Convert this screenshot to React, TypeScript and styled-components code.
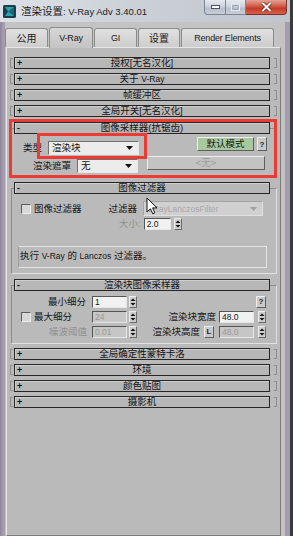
import React from 'react';
import styled, { createGlobalStyle } from 'styled-components';

const GlobalStyle = createGlobalStyle`
  html, body {
    margin: 0;
    padding: 0;
    background: #3a3a3a;
  }
  body {
    font-family: "Liberation Sans", "Noto Sans CJK SC", sans-serif;
    font-size: 9.5px;
    color: #151515;
  }
`;

const Window = styled.div`
  width: 293px;
  height: 536px;
  box-sizing: border-box;
  display: flex;
  flex-direction: column;
  overflow: hidden;
  background: linear-gradient(to right, #8d8597 0, #a59daf 3px, #a59daf 100%);
  border-right: 3px solid #3b3b3b;
`;

const TitleBar = styled.div`
  height: 22px;
  flex: none;
  display: flex;
  align-items: center;
  padding-left: 3px;
  background: linear-gradient(90deg, #dde1e7 0%, #ccd1d8 45%, #c0c4cc 100%);
`;

const TitleText = styled.span`
  margin-left: 5px;
  font-size: 10.5px;
  line-height: 12px;
  color: #1b1b1b;
  white-space: nowrap;
`;

const TitleLat = styled.span`
  font-size: 9.5px;
`;

const WinButtons = styled.div`
  margin-left: auto;
  margin-right: 3px;
  align-self: flex-start;
  display: flex;
  height: 15px;
`;

const WinButton = styled.div<{ $kind: 'min' | 'max' | 'close' }>`
  width: ${(p) => (p.$kind === 'close' ? 41 : p.$kind === 'min' ? 22 : 20)}px;
  height: 15px;
  box-sizing: border-box;
  display: flex;
  align-items: center;
  justify-content: center;
  border: 1px solid ${(p) => (p.$kind === 'close' ? '#7a3226' : '#7d8594')};
  border-top: none;
  border-left-width: ${(p) => (p.$kind === 'min' ? 1 : 0)}px;
  border-radius: ${(p) =>
    p.$kind === 'min' ? '0 0 0 4px' : p.$kind === 'close' ? '0 0 4px 0' : '0'};
  background: ${(p) =>
    p.$kind === 'close'
      ? 'linear-gradient(#e4a496 0%, #cf5a47 45%, #c43b28 60%, #d8624c 100%)'
      : 'linear-gradient(#e6eaf0 0%, #ccd3dc 45%, #b7c0cc 60%, #c6ced8 100%)'};
`;

const Client = styled.div`
  flex: 1;
  display: flex;
  flex-direction: column;
  margin: 0 5px;
  background: #c3c3c3;
`;

const TabRow = styled.div`
  height: 25px;
  flex: none;
  display: flex;
  align-items: flex-end;
  position: relative;
  z-index: 1;
`;

const Tab = styled.div<{ $active?: boolean; $w: number; $latin?: boolean }>`
  width: ${(p) => p.$w}px;
  height: ${(p) => (p.$active ? 21 : 19)}px;
  box-sizing: border-box;
  margin-right: 1px;
  margin-bottom: ${(p) => (p.$active ? -1 : 0)}px;
  display: flex;
  align-items: center;
  justify-content: center;
  border: 1px solid #8b8b8b;
  border-bottom: none;
  border-radius: 3px 3px 0 0;
  background: ${(p) =>
    p.$active ? 'linear-gradient(#d6d6d6, #c4c4c4)' : 'linear-gradient(#e0e0e0, #cdcdcd)'};
  font-size: ${(p) => (p.$latin ? 9 : 10)}px;
  line-height: 11px;
  letter-spacing: ${(p) => (p.$latin ? '-0.2px' : '0')};
  color: #1a1a1a;
  white-space: nowrap;
`;

const Panel = styled.div`
  flex: 1;
  margin: 0 4px 0 1px;
  padding: 9px 0 0 3px;
  border: 1px solid;
  border-color: #e6e6e6 #7b7b7b #7b7b7b #e6e6e6;
  background: #bababa;
`;

const RolloutList = styled.div`
  width: 267px;
  display: flex;
  flex-direction: column;
  gap: 4px;
`;

const RolloutRow = styled.div`
  height: 12px;
  display: flex;
  align-items: center;
`;

const Bracket = styled.span<{ $side: 'left' | 'right' }>`
  width: 2px;
  height: 8px;
  border: 1px solid #8e8e8e;
  ${(p) => (p.$side === 'left' ? 'border-right: none;' : 'border-left: none;')}
  margin-left: ${(p) => (p.$side === 'left' ? 0 : 4)}px;
  margin-right: ${(p) => (p.$side === 'left' ? 1 : 0)}px;
`;

const Bar = styled.div<{ $inFrame?: boolean }>`
  width: 256px;
  height: 12px;
  box-sizing: border-box;
  display: grid;
  grid-template-columns: 12px 1fr 12px;
  align-items: center;
  border: 1px solid #262626;
  background: #b7b7b7;
  box-shadow: inset 1px 1px 0 #cfcfcf;
  margin: ${(p) => (p.$inFrame ? '-7px 0 0 2px' : '0')};
  font-size: 9.5px;
  line-height: 10px;
  color: #141414;
`;

const Sign = styled.span`
  padding-left: 2px;
  font-weight: bold;
  font-size: 9px;
  font-family: "Liberation Sans", sans-serif;
`;

const BarTitle = styled.span`
  text-align: center;
  white-space: nowrap;
`;

const Lat = styled.span`
  font-size: 8.5px;
`;

const Frame = styled.div<{ $pb: number }>`
  position: relative;
  margin-top: 7px;
  margin-left: 1px;
  width: 266px;
  box-sizing: border-box;
  padding-bottom: ${(p) => p.$pb}px;
  border: 1px solid;
  border-color: #8c8c8c #e2e2e2 #e2e2e2 #8c8c8c;
`;

const FlexRow = styled.div<{ $mt: number; $align?: string }>`
  display: flex;
  align-items: ${(p) => p.$align || 'flex-start'};
  margin-top: ${(p) => p.$mt}px;
`;

const Label = styled.span<{ $ml?: number; $mt?: number; $w?: number; $muted?: boolean }>`
  margin-left: ${(p) => p.$ml || 0}px;
  margin-top: ${(p) => p.$mt || 0}px;
  ${(p) => (p.$w ? `width: ${p.$w}px;` : '')}
  line-height: 10px;
  white-space: nowrap;
  color: ${(p) => (p.$muted ? '#8f8f8f' : '#141414')};
`;

const SelectBox = styled.div<{ $w: number; $h: number; $ml?: number; $mt?: number; $disabled?: boolean }>`
  position: relative;
  width: ${(p) => p.$w}px;
  height: ${(p) => p.$h}px;
  margin-left: ${(p) => p.$ml || 0}px;
  margin-top: ${(p) => p.$mt || 0}px;
  box-sizing: border-box;
  display: flex;
  align-items: center;
  justify-content: space-between;
  padding: 0 5px 0 3px;
  border: 1px solid;
  border-color: ${(p) =>
    p.$disabled ? '#a4a4a4 #e0e0e0 #e0e0e0 #a4a4a4' : '#707070 #e8e8e8 #e8e8e8 #707070'};
  background: ${(p) => (p.$disabled ? '#d0d0d0' : '#ececec')};
  color: ${(p) => (p.$disabled ? '#a8a8a8' : '#121212')};
  line-height: 10px;
  white-space: nowrap;
`;

const Button = styled.div<{ $w: number; $h: number; $ml?: number; $tone?: 'green' | 'plain' | 'disabled' }>`
  width: ${(p) => p.$w}px;
  height: ${(p) => p.$h}px;
  margin-left: ${(p) => p.$ml || 0}px;
  box-sizing: border-box;
  display: flex;
  align-items: center;
  justify-content: center;
  border: 1px solid;
  border-color: #eeeeee #5e5e5e #5e5e5e #eeeeee;
  background: ${(p) =>
    p.$tone === 'green' ? '#a8c99f' : p.$tone === 'disabled' ? '#c3c3c3' : '#c9c9c9'};
  color: ${(p) => (p.$tone === 'disabled' ? '#9d9d9d' : '#151515')};
  line-height: 10px;
  white-space: nowrap;
`;

const SmallBtn = styled.div`
  width: 10px;
  height: 12px;
  box-sizing: border-box;
  display: flex;
  align-items: center;
  justify-content: center;
  border: 1px solid;
  border-color: #eeeeee #5e5e5e #5e5e5e #eeeeee;
  background: #c9c9c9;
  font-family: "Liberation Sans", sans-serif;
  font-size: 8px;
  font-weight: bold;
  color: #222;
`;

const Check = styled.span<{ $ml?: number }>`
  width: 10px;
  height: 10px;
  flex: none;
  margin-left: ${(p) => p.$ml || 0}px;
  box-sizing: border-box;
  border: 1px solid;
  border-color: #5c5c5c #ececec #ececec #5c5c5c;
  background: #d8d8d8;
`;

const Field = styled.div<{ $w?: number; $ml?: number; $disabled?: boolean }>`
  width: ${(p) => p.$w || 35}px;
  height: 12px;
  margin-left: ${(p) => p.$ml || 0}px;
  box-sizing: border-box;
  display: flex;
  align-items: center;
  padding-left: 2px;
  border: 1px solid;
  border-color: #555555 #e6e6e6 #e6e6e6 #555555;
  background: ${(p) => (p.$disabled ? '#c6c6c6' : '#f1f1f1')};
  color: ${(p) => (p.$disabled ? '#9a9a9a' : '#151515')};
  font-size: 8.5px;
  line-height: 10px;
`;

const SpinBox = styled.div<{ $ml?: number; $end?: boolean }>`
  width: 8px;
  height: 12px;
  margin-left: ${(p) => p.$ml || 0}px;
  justify-self: ${(p) => (p.$end ? 'end' : 'start')};
  box-sizing: border-box;
  display: flex;
  align-items: center;
  justify-content: center;
  border: 1px solid;
  border-color: #ececec #6a6a6a #6a6a6a #ececec;
  background: #cdcdcd;
`;

const DescBox = styled.div`
  margin: 16px 0 0 6px;
  width: 249px;
  height: 22px;
  box-sizing: border-box;
  padding: 4px 0 0 1px;
  border: 1px solid;
  border-color: #e4e4e4 #e4e4e4 #e4e4e4 #9a9a9a;
  line-height: 10px;
  white-space: nowrap;
`;

const Grid = styled.div`
  display: grid;
  grid-template-columns: 78px 35px 10px 76px 35px 10px;
  grid-auto-rows: 12px;
  column-gap: 2px;
  row-gap: 3px;
  margin-top: 5px;
  align-items: center;
`;

const Cell = styled.div<{ $col: number; $justify?: string; $pr?: number; $pl?: number }>`
  grid-column: ${(p) => p.$col};
  display: flex;
  align-items: center;
  justify-content: ${(p) => p.$justify || 'flex-start'};
  padding-right: ${(p) => p.$pr || 0}px;
  padding-left: ${(p) => p.$pl || 0}px;
  gap: 3px;
  line-height: 10px;
  white-space: nowrap;
`;

const Annotation = styled.div<{ $l: number; $t: number; $w: number; $h: number }>`
  position: absolute;
  left: ${(p) => p.$l}px;
  top: ${(p) => p.$t}px;
  width: ${(p) => p.$w}px;
  height: ${(p) => p.$h}px;
  box-sizing: border-box;
  border: 3px solid #ec3a35;
  pointer-events: none;
`;

const Cursor = styled.svg`
  position: absolute;
  left: 2px;
  top: -5px;
`;

function DropArrow({ color = '#111' }: { color?: string }) {
  return (
    <svg width="7" height="4" viewBox="0 0 7 4">
      <path d="M0 0H7L3.5 4Z" fill={color} />
    </svg>
  );
}

function Spinner({ ml, end }: { ml?: number; end?: boolean }) {
  return (
    <SpinBox $ml={ml} $end={end}>
      <svg width="6" height="10" viewBox="0 0 6 10">
        <path d="M3 1.5L5.5 4H0.5Z M3 8.5L5.5 6H0.5Z" fill="#111" />
      </svg>
    </SpinBox>
  );
}

function Collapsed({ children }: { children: React.ReactNode }) {
  return (
    <RolloutRow>
      <Bracket $side="left" />
      <Bar>
        <Sign>+</Sign>
        <BarTitle>{children}</BarTitle>
      </Bar>
      <Bracket $side="right" />
    </RolloutRow>
  );
}

function AppIcon() {
  return (
    <svg width="13" height="13" viewBox="0 0 13 13">
      <rect x="0" y="0" width="13" height="13" rx="1.5" fill="#17404a" />
      <path d="M2 2H11L7 6.5L11 11H2L5 6.5Z" fill="#2f9fb2" />
      <path d="M5 6.5L11 2V11Z" fill="#1c6674" />
    </svg>
  );
}

export default function App() {
  return (
    <>
      <GlobalStyle />
      <Window>
        <TitleBar>
          <AppIcon />
          <TitleText>
            渲染设置<TitleLat>: V-Ray Adv 3.40.01</TitleLat>
          </TitleText>
          <WinButtons>
            <WinButton $kind="min">
              <svg width="9" height="4" viewBox="0 0 9 4">
                <rect x="0.5" y="0.5" width="8" height="3" fill="#fff" stroke="#4a5262" />
              </svg>
            </WinButton>
            <WinButton $kind="max">
              <svg width="9" height="8" viewBox="0 0 9 8">
                <rect x="0.5" y="0.5" width="8" height="7" fill="none" stroke="#e8ecf2" />
                <rect x="2" y="2.5" width="5" height="4" fill="none" stroke="#9aa3b0" />
              </svg>
            </WinButton>
            <WinButton $kind="close">
              <svg width="11" height="10" viewBox="0 0 11 10">
                <path d="M1.5 1L9.5 9M9.5 1L1.5 9" stroke="#5a1a10" strokeWidth="3.4" />
                <path d="M1.5 1L9.5 9M9.5 1L1.5 9" stroke="#ffffff" strokeWidth="2" />
              </svg>
            </WinButton>
          </WinButtons>
        </TitleBar>

        <Client>
          <TabRow>
            <Tab $w={43}>公用</Tab>
            <Tab $w={44} $active $latin>
              V-Ray
            </Tab>
            <Tab $w={43} $latin>
              GI
            </Tab>
            <Tab $w={42}>设置</Tab>
            <Tab $w={93} $latin>
              Render Elements
            </Tab>
          </TabRow>

          <Panel>
            <RolloutList>
              <Collapsed>授权[无名汉化]</Collapsed>
              <Collapsed>
                关于 <Lat>V-Ray</Lat>
              </Collapsed>
              <Collapsed>帧缓冲区</Collapsed>
              <Collapsed>全局开关[无名汉化]</Collapsed>

              <Frame $pb={3}>
                <Bar $inFrame>
                  <Sign>-</Sign>
                  <BarTitle>图像采样器(抗锯齿)</BarTitle>
                </Bar>
                <FlexRow $mt={3}>
                  <Label $ml={11} $mt={6} $w={25}>
                    类型
                  </Label>
                  <SelectBox $w={91} $h={14} $mt={4}>
                    渲染块
                    <DropArrow />
                  </SelectBox>
                  <Button $w={57} $h={14} $ml={58} $tone="green">
                    默认模式
                  </Button>
                  <SmallBtn style={{ marginLeft: 3, height: 14 }}>?</SmallBtn>
                </FlexRow>
                <FlexRow $mt={1}>
                  <Label $ml={21} $mt={5} $w={40}>
                    渲染遮罩
                  </Label>
                  <SelectBox $w={61} $h={14} $ml={4} $mt={3}>
                    无
                    <DropArrow />
                  </SelectBox>
                  <Button $w={118} $h={14} $ml={9} $tone="disabled">
                    &lt;无&gt;
                  </Button>
                </FlexRow>
                <Annotation $l={-3} $t={-10} $w={268} $h={59} />
                <Annotation $l={25} $t={4} $w={110} $h={26} />
              </Frame>

              <Frame $pb={5}>
                <Bar $inFrame>
                  <Sign>-</Sign>
                  <BarTitle>图像过滤器</BarTitle>
                </Bar>
                <FlexRow $mt={7} $align="center">
                  <Check $ml={9} />
                  <Label $ml={3}>图像过滤器</Label>
                  <Label $ml={27}>过滤器</Label>
                  <SelectBox $w={120} $h={15} $ml={6} $disabled>
                    <Lat>VRayLanczosFilter</Lat>
                    <DropArrow color="#a0a0a0" />
                    <Cursor width="12" height="18" viewBox="0 0 12 18">
                      <path
                        d="M1 1V15L4.4 11.8L6.8 16.8L8.9 15.8L6.6 10.9H11Z"
                        fill="#ffffff"
                        stroke="#111"
                        strokeWidth="1"
                        strokeLinejoin="round"
                      />
                    </Cursor>
                  </SelectBox>
                </FlexRow>
                <FlexRow $mt={2} $align="center">
                  <Label $ml={107} $muted>
                    大小:
                  </Label>
                  <Field $w={27} $ml={3}>
                    2.0
                  </Field>
                  <Spinner ml={3} />
                </FlexRow>
                <DescBox>
                  执行 <Lat>V-Ray</Lat> 的 <Lat>Lanczos</Lat> 过滤器。
                </DescBox>
              </Frame>

              <Frame $pb={5}>
                <Bar $inFrame>
                  <Sign>-</Sign>
                  <BarTitle>渲染块图像采样器</BarTitle>
                </Bar>
                <Grid>
                  <Cell $col={1} $justify="flex-end" $pr={4}>
                    最小细分
                  </Cell>
                  <Field>1</Field>
                  <Spinner />
                  <Cell $col={6}>
                    <SmallBtn>?</SmallBtn>
                  </Cell>

                  <Cell $col={1} $pl={9}>
                    <Check />
                    最大细分
                  </Cell>
                  <Field $disabled>24</Field>
                  <Spinner />
                  <Cell $col={4} $justify="flex-end" $pr={1}>
                    渲染块宽度
                  </Cell>
                  <Field>48.0</Field>
                  <Spinner end />

                  <Cell $col={1} $justify="flex-end" $pr={3}>
                    <Label $muted>噪波阈值</Label>
                  </Cell>
                  <Field $disabled>0.01</Field>
                  <Spinner />
                  <Cell $col={4} $justify="flex-end" $pr={3}>
                    渲染块高度
                    <SmallBtn style={{ marginLeft: 1 }}>L</SmallBtn>
                  </Cell>
                  <Field $disabled>48.0</Field>
                  <Spinner end />
                </Grid>
              </Frame>

              <Collapsed>全局确定性蒙特卡洛</Collapsed>
              <Collapsed>环境</Collapsed>
              <Collapsed>颜色贴图</Collapsed>
              <Collapsed>摄影机</Collapsed>
            </RolloutList>
          </Panel>
        </Client>
      </Window>
    </>
  );
}
